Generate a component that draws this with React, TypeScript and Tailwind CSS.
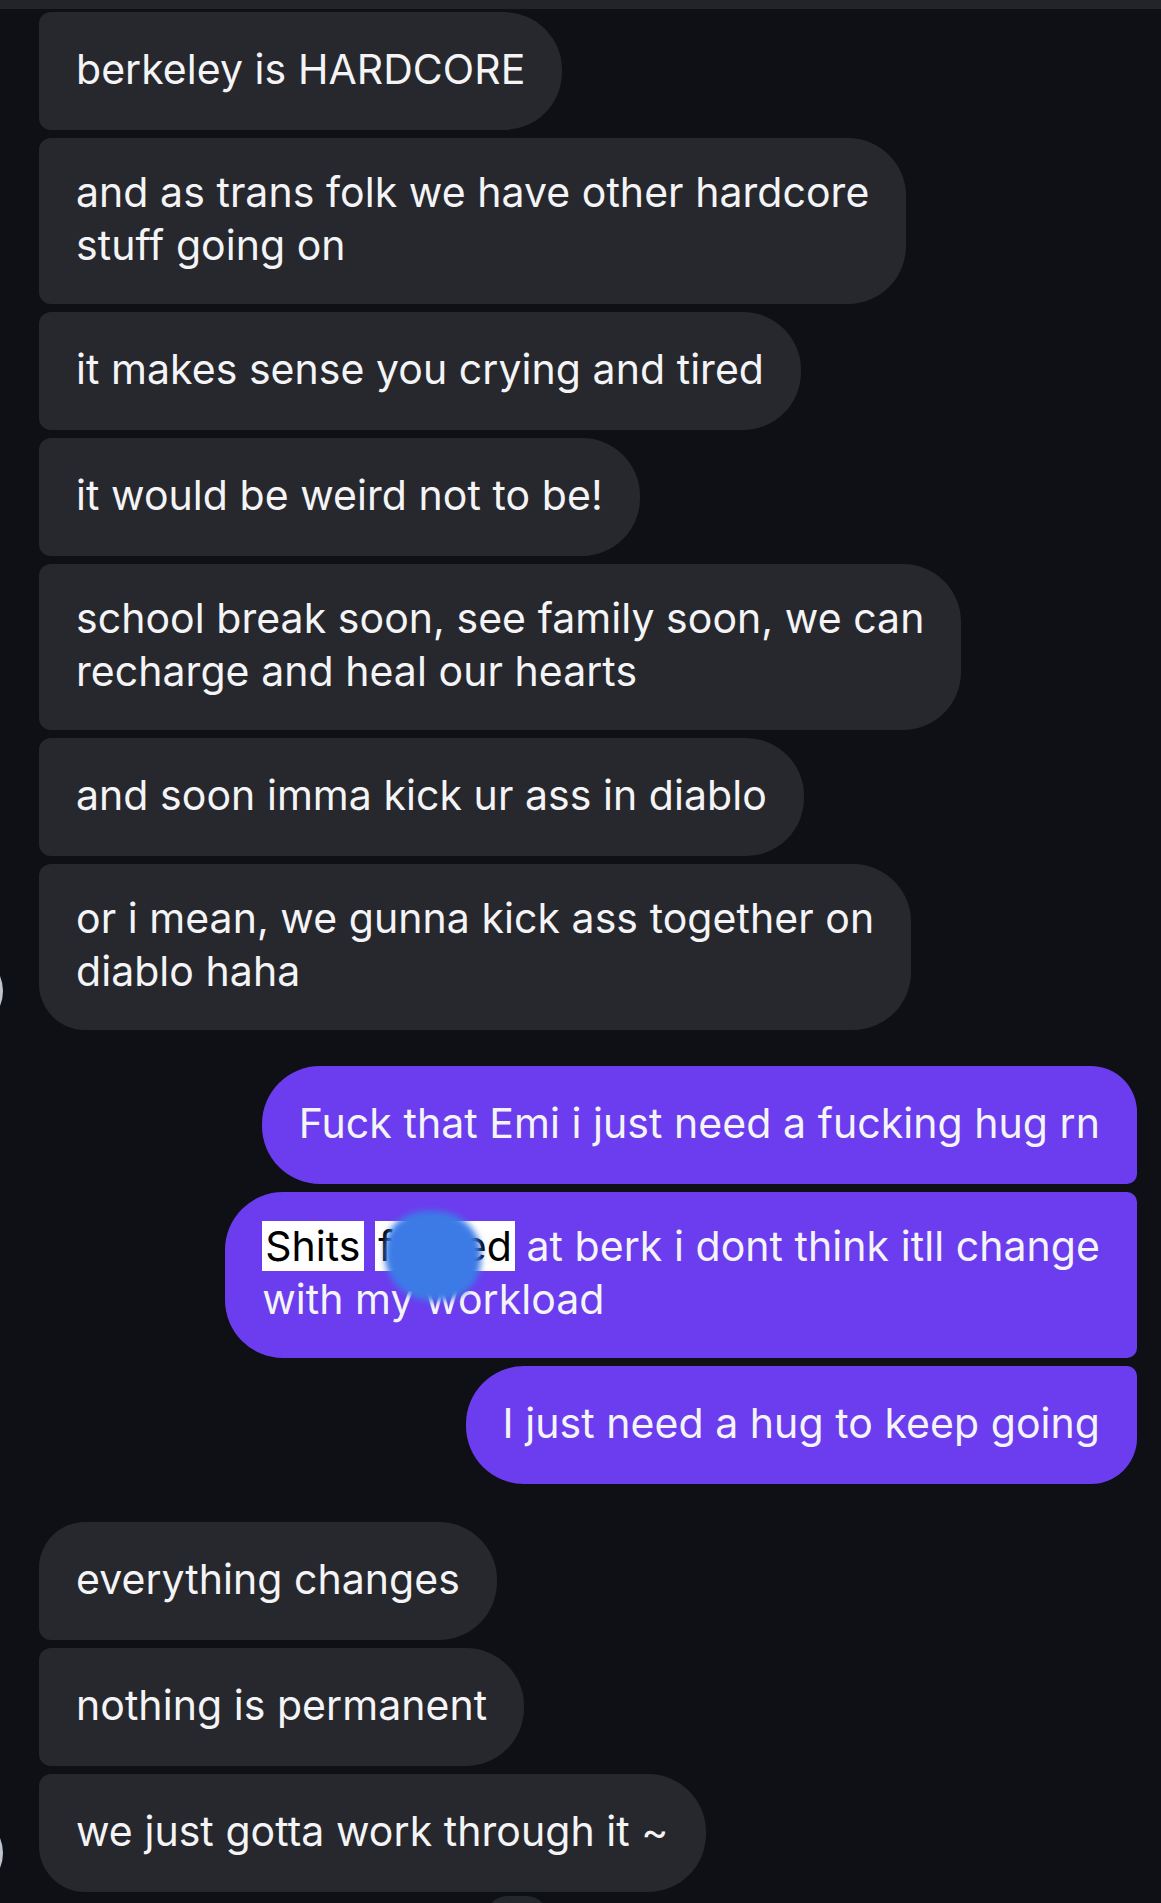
import { ReactNode } from 'react';

type Side = 'in' | 'out';
type Pos = 'first' | 'mid' | 'last';

function Bubble({ side, pos, avatar, children }: { side: Side; pos: Pos; avatar?: boolean; children: ReactNode }) {
  // corner shapes follow the grouping of messages
  let corners = '';
  if (side === 'in') {
    corners = 'rounded-tr-[58px] rounded-br-[58px] ';
    corners += pos === 'first' ? 'rounded-tl-[46px] ' : 'rounded-tl-[12px] ';
    corners += pos === 'last' ? 'rounded-bl-[46px]' : 'rounded-bl-[12px]';
  } else {
    corners = 'rounded-tl-[58px] rounded-bl-[58px] ';
    corners += pos === 'first' ? 'rounded-tr-[46px] ' : 'rounded-tr-[10px] ';
    corners += pos === 'last' ? 'rounded-br-[46px]' : 'rounded-br-[10px]';
  }
  const color = side === 'in' ? 'bg-[#26282d]' : 'bg-[#6b3def]';

  return (
    <div className={`relative flex min-h-[118px] w-fit items-center whitespace-nowrap px-[37px] pt-[28px] pb-[32px] text-[41px] leading-[53px] text-[#f4f4f6] ${color} ${corners}`}>
      {avatar && <span className="absolute bottom-0 left-[-114px] h-[78px] w-[78px] rounded-full bg-[#bfc5ce]" />}
      <div>{children}</div>
    </div>
  );
}

export default function App() {
  return (
    <div className="h-[1903px] overflow-hidden bg-[#0e1015] font-['Inter','Liberation_Sans',sans-serif] tracking-[0.05px]">
      <div className="h-[9px] bg-[#222429]" />
      <div className="flex flex-col pt-[3px]">
        <div className="flex flex-col items-start gap-2 pl-[39px]">
          <Bubble side="in" pos="mid">berkeley is HARDCORE</Bubble>
          <Bubble side="in" pos="mid">
            and as trans folk we have other hardcore
            <br />
            stuff going on
          </Bubble>
          <Bubble side="in" pos="mid">it makes sense you crying and tired</Bubble>
          <Bubble side="in" pos="mid">it would be weird not to be!</Bubble>
          <Bubble side="in" pos="mid">
            school break soon, see family soon, we can
            <br />
            recharge and heal our hearts
          </Bubble>
          <Bubble side="in" pos="mid">and soon imma kick ur ass in diablo</Bubble>
          <Bubble side="in" pos="last" avatar>
            or i mean, we gunna kick ass together on
            <br />
            diablo haha
          </Bubble>
        </div>

        <div className="mt-[36px] flex flex-col items-end gap-2 pr-[24px]">
          <Bubble side="out" pos="first">Fuck that Emi i just need a fucking hug rn</Bubble>
          <Bubble side="out" pos="mid">
            <span className="bg-white px-[3px] text-black">Shits</span>{' '}
            <span className="relative bg-white px-[3px] text-black">
              fucked
              <span className="absolute left-[10px] top-[-10px] h-[90px] w-[96px] rounded-[42%_48%_45%_50%] bg-[#3c7be6] blur-[3px]" />
            </span>{' '}
            at berk i dont think itll change
            <br />
            with my workload
          </Bubble>
          <Bubble side="out" pos="last">I just need a hug to keep going</Bubble>
        </div>

        <div className="mt-[38px] flex flex-col items-start gap-2 pl-[39px]">
          <Bubble side="in" pos="first">everything changes</Bubble>
          <Bubble side="in" pos="mid">nothing is permanent</Bubble>
          <Bubble side="in" pos="last" avatar>we just gotta work through it ~</Bubble>
          <div className="ml-[448px] mt-[-4px] h-[40px] w-[60px] rounded-full bg-[#24272c]" />
        </div>
      </div>
    </div>
  );
}
